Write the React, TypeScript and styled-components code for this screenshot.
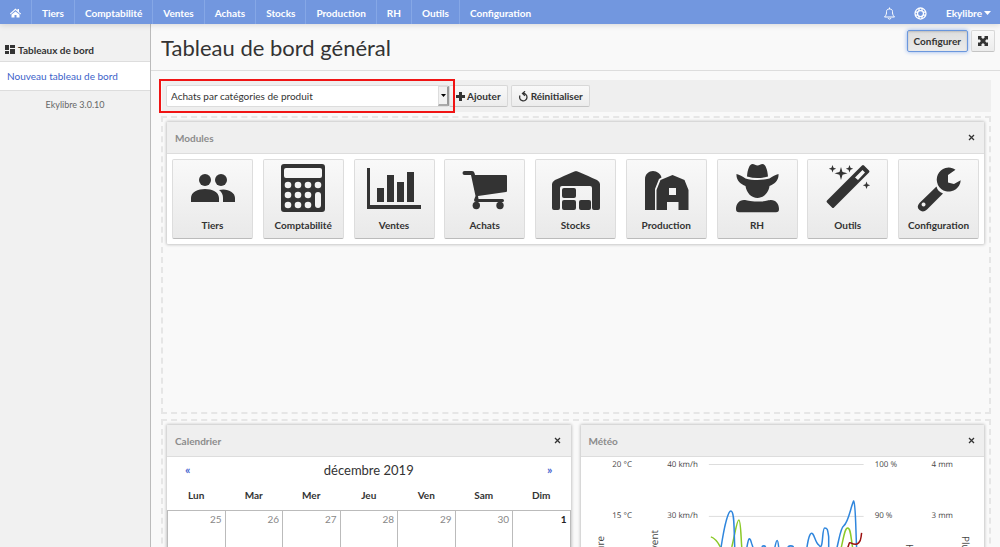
import React from "react";
import styled, { createGlobalStyle, css } from "styled-components";

const Global = createGlobalStyle`
  *, *::before, *::after { box-sizing: border-box; }
  html, body { margin: 0; }
  body { overflow: hidden; background: #f9f9f9; color: #333; font: 10px/14px Lato, "Liberation Sans", sans-serif; }
  button, select { font: inherit; color: inherit; }
  a { color: inherit; text-decoration: none; }
  svg { display: block; }
`;

const Shell = styled.div`
  display: flex;
  flex-direction: column;
  height: 100vh;
  overflow: hidden;
`;
const TopBar = styled.header`
  display: flex;
  justify-content: space-between;
  flex: none;
  height: 24px;
  background: #7297df;
  color: #fff;
  font-weight: 700;
  z-index: 1;
  box-shadow: 0 1px 6px rgba(0, 0, 0, 0.14);
`;
const NavGroup = styled.nav`
  display: flex;
  align-items: stretch;
`;
const NavLink = styled.a<{ $last?: boolean }>`
  display: flex;
  align-items: center;
  padding: 1px 10px 0;
  border-right: ${(p) => (p.$last ? "0" : "1px solid #85a7e6")};
`;
const IconLink = styled.a`
  display: flex;
  align-items: center;
  padding: 2px 9px 0;
`;
const UserButton = styled.button`
  display: flex;
  align-items: center;
  gap: 2px;
  padding: 1px 9px 0 10px;
  border: 0;
  background: none;
  font-weight: 700;
`;

const Body = styled.div`
  display: flex;
  flex: 1;
  min-height: 0;
`;
const Side = styled.aside`
  flex: none;
  width: 151px;
  background: #f1f1f1;
  border-right: 1px solid #bbb;
`;
const SideTitle = styled.h2`
  display: flex;
  align-items: center;
  gap: 3px;
  margin: 0;
  height: 37px;
  padding: 14px 5px 0;
  font-size: 10px;
  font-weight: 700;
`;
const SideLink = styled.a`
  display: flex;
  align-items: center;
  height: 30px;
  padding: 0 7px;
  background: #fff;
  border: solid #ddd;
  border-width: 1px 0;
  color: #3b5fc9;
`;
const Version = styled.p`
  margin: 7px 0;
  text-align: center;
  font-size: 9px;
  color: #666;
`;
const Main = styled.main`
  flex: 1;
  min-width: 0;
  overflow: hidden;
`;
const TitleRow = styled.div`
  display: flex;
  justify-content: space-between;
  align-items: flex-start;
  height: 47px;
  padding: 6px 5px 0 10px;
  border-bottom: 1px solid #ddd;
`;
const Title = styled.h1`
  margin: 4px 0 0;
  font-size: 22px;
  line-height: 28px;
  font-weight: 400;
`;
const Row = styled.div`
  display: flex;
  gap: 3px;
`;
const Button = styled.button<{ $active?: boolean }>`
  display: flex;
  align-items: center;
  justify-content: center;
  gap: 2px;
  height: 22px;
  padding: 0 6px;
  border: 1px solid #d8d8d8;
  border-bottom-color: #c4c4c4;
  border-radius: 2px;
  background: linear-gradient(#f9f9f9, #ececec);
  font-weight: 700;
  ${(p) => p.$active && css`
    border-color: #6b97dd;
    background: linear-gradient(#dedede, #ebebeb);
    box-shadow: 0 0 4px #8fb2ee, inset 0 1px 2px #bbb;
  `}
`;
const Toolbar = styled.div`
  display: flex;
  align-items: center;
  gap: 3px;
  height: 32px;
  margin: 9px 9px 4px 11px;
  padding: 0 4px;
  background: #efefef;
`;
const PickerWrap = styled.div`
  position: relative;
  width: 283px;
  margin-right: -3px;
`;
const Picker = styled.select`
  appearance: none;
  display: block;
  width: 100%;
  height: 22px;
  padding: 0 16px 0 4px;
  border: 1px solid #ddd;
  border-radius: 2px;
  background: #fff;
`;
const PickerArrow = styled.span`
  position: absolute;
  top: 1px;
  right: 0;
  display: grid;
  place-items: center;
  width: 11px;
  height: 20px;
  background: #f1f1f1;
  border: 1px solid #ddd;
  border-right: 2px solid #999;
  border-bottom: 2px solid #aaa;
  pointer-events: none;
`;
const Highlight = styled.span`
  position: absolute;
  inset: -6px -6px -6px -7px;
  border: 2px solid #f01414;
  pointer-events: none;
  z-index: 1;
`;

const Zone = styled.section<{ $tall?: boolean }>`
  display: grid;
  grid-auto-flow: column;
  grid-auto-columns: minmax(0, 1fr);
  align-items: start;
  gap: 10px;
  margin: 0 9px 5px 10px;
  padding: 4px 5px 4px 4px;
  height: ${(p) => (p.$tall ? "298px" : "auto")};
  border: 2px dashed #e6e6e6;
`;
const Panel = styled.article`
  background: #fff;
  border-radius: 1px;
  box-shadow: 0 0 3px 1px rgba(0, 0, 0, 0.2);
`;
const PanelHead = styled.header`
  display: flex;
  justify-content: space-between;
  align-items: center;
  height: 32px;
  padding: 0 8px;
  background: #efefef;
  border-bottom: 1px solid #ddd;
`;
const PanelTitle = styled.h3`
  margin: 0;
  font-size: 10px;
  font-weight: 700;
  color: #8c8c8c;
`;
const Close = styled.button`
  display: grid;
  place-items: center;
  width: 10px;
  height: 14px;
  padding: 0;
  border: 0;
  background: none;
`;
const Tiles = styled.div`
  display: flex;
  justify-content: space-between;
  padding: 5px;
`;
const Tile = styled.a`
  display: flex;
  flex-direction: column;
  align-items: center;
  width: 81px;
  height: 80px;
  padding-top: 4px;
  gap: 4px;
  border: 1px solid #ddd;
  border-bottom-color: #bbb;
  border-radius: 2px;
  background: linear-gradient(#f9f9f9, #e9e9e9);
  font-weight: 700;
`;

const CalHead = styled.div`
  display: flex;
  justify-content: space-between;
  align-items: center;
  height: 25px;
  padding: 0 18px;
`;
const Month = styled.h4`
  margin: 0;
  font-size: 13px;
  font-weight: 400;
`;
const Step = styled.button`
  padding: 0;
  border: 0;
  background: none;
  color: #4a68d0;
  font-size: 12px;
  font-weight: 700;
`;
const Calendar = styled.table`
  width: 100%;
  table-layout: fixed;
  border-collapse: collapse;
  th { height: 28px; padding: 0 0 2px; font-weight: 700; }
  td {
    height: 50px;
    padding: 1px 3px;
    border: 1px solid #bbb;
    vertical-align: top;
    text-align: right;
    color: #888;
  }
  td:last-child { color: #222; font-weight: 700; }
`;
const ChartSvg = styled.svg`
  width: 100%;
  height: auto;
  text { font-family: "Open Sans", "Noto Sans", sans-serif; font-size: 8px; fill: #444; text-rendering: geometricPrecision; }
  .axis { font-size: 10px; }
`;

const ink = "#333";
const icons: Record<string, React.ReactNode> = {
  Tiers: <>
    <circle cx="19" cy="20" r="6" /><circle cx="35" cy="20" r="6" />
    <path d="M5 42v-4c0-6 7-9 14-9s14 3 14 9v4zM33 30c8-2 16 2 16 8v4H37v-4c0-3-1-6-4-8z" />
  </>,
  "Comptabilité": <>
    <path fillRule="evenodd" d="M8 4h38q3 0 3 3v42q0 3-3 3H8q-3 0-3-3V7q0-3 3-3zm2 4q-2 0-2 2v6q0 2 2 2h34q2 0 2-2v-6q0-2-2-2z" />
    <g fill="#f3f3f3">
      {[25, 35, 45].flatMap((y) => [12, 22, 32].map((x) => <circle key={x + "-" + y} cx={x} cy={y} r="3.3" />))}
      <circle cx="42" cy="25" r="3.3" /><rect x="39" y="32" width="6" height="16" rx="3" />
    </g>
  </>,
  Ventes: <path d="M0 8h3v37h51v4H0zM10 28h7v14h-7zM20 15h7v27h-7zM30 22h7v20h-7zM40 12h7v30h-7z" />,
  Achats: <>
    <path d="M6.500 11H14q2 0 2.500 2l.5 2h31q1 0 1 1v15q0 1-1 1l-28 4 .5 3h24q1.500 0 1.500 1.500T44.500 42H18q-2 0-2-2l1.500-4-4.500-21H6.500q-2 0-2-2t2-2z" />
    <circle cx="18.300" cy="45.500" r="3.700" /><circle cx="42" cy="45.500" r="3.700" />
  </>,
  Stocks: <>
    <path d="M27 11q1 0 21 9q3 2 3 4v24q0 2-2 2h-4q-2 0-2-2V28q0-2-2-2H13q-2 0-2 2v20q0 2-2 2H5q-2 0-2-2V24q0-2 3-4Q26 11 27 11z" />
    <rect x="13" y="28" width="14" height="10" rx="2" /><rect x="13" y="40" width="14" height="10" rx="2" /><rect x="30" y="40" width="12" height="10" rx="2" />
  </>,
  Production: <>
    <path d="M6 50V19c0-5 4-8 8-8s8 3 8.500 6.500L20 19l-4 10v21z" />
    <path fillRule="evenodd" d="M17.500 50V30l4-10 12-5 12 5 4 10v20h-10v-8H28v8zM30 28v7h7v-7z" />
  </>,
  RH: <>
    <path d="M17 16.500c.5-7 2.500-12.500 5.500-12.500 2 0 3 1.500 5 1.500s3-1.500 5-1.500c3 0 5 5.500 5.500 12.500-7 2-14 2-21 0z" />
    <path d="M6.500 14c3 .5 6 2.500 9 4.500 7 2 17 2 24 0 3-2 6-4 9-4.500.5 6-4 10-9 12-1 7-6 12-12 12s-11-5-12-12c-5-2-9.500-6-9-12z" />
    <path d="M6 49c0-5 3-9 8-9 3 0 5 1.500 13.500 1.500S38 40 41 40c5 0 8 4 8 9q0 3.300-3 3.300H9q-3 0-3-3.300z" />
  </>,
  Outils: <>
    <path fillRule="evenodd" d="M41 5.500q1-1 2 0l5 5q1 1 0 2L13 47.500q-1 1-2 0l-5-5q-1-1 0-2zM41.500 10L34 17.500l3 2.500 7-7.500z" />
    <path d="M20 7l1.500 5 5 1.300-5 1.500L20 20l-1.500-5.200-5-1.500 5-1.300zM11.500 5l1 2.700 2.700 1-2.700 1-1 2.700-1-2.700-2.700-1 2.700-1zM28.500 5l1 2.700 2.700 1-2.700 1-1 2.700-1-2.700-2.700-1 2.700-1zM45.500 21.500l1 2.700 2.700 1-2.700 1-1 2.700-1-2.700-2.700-1 2.700-1z" />
  </>,
  Configuration: <>
    <path d="M43.500 9.700A12 12 0 1 0 48.700 20.300L42 24l-6-1.500V15z" />
    <path fillRule="evenodd" d="M24.500 26.500q1 5 6.500 7L15 49.500q-4 3.500-7.500.5T7.500 43zM11.500 42.500a2 2 0 1 0 .1 0z" />
  </>,
};

const nav = ["Tiers", "Comptabilité", "Ventes", "Achats", "Stocks", "Production", "RH", "Outils", "Configuration"];
const days = ["Lun", "Mar", "Mer", "Jeu", "Ven", "Sam", "Dim"];

function Cross() {
  return (
    <svg width="7" height="7" viewBox="0 0 7 7" stroke="#333" strokeWidth="1.3"><path d="M1 1l5 5M6 1L1 6" /></svg>
  );
}

function Widget({ title, children }: { title: string; children: React.ReactNode }) {
  return (
    <Panel>
      <PanelHead>
        <PanelTitle>{title}</PanelTitle>
        <Close aria-label={`Fermer ${title}`}><Cross /></Close>
      </PanelHead>
      {children}
    </Panel>
  );
}

function Weather() {
  return (
    <ChartSvg viewBox="0 0 404 130" role="img" aria-label="Météo">
      <path d="M128 7.500h155M128 59.500h155" stroke="#ddd" fill="none" />
      <g textAnchor="end">
        <text x="51" y="10">20 °C</text><text x="51" y="61">15 °C</text>
        <text x="117" y="10">40 km/h</text><text x="117" y="61">30 km/h</text>
      </g>
      <text x="294" y="10">100 %</text><text x="294" y="61">90 %</text>
      <text x="351" y="10">4 mm</text><text x="351" y="61">3 mm</text>
      <text className="axis" textAnchor="end" transform="translate(23 79) rotate(-90)">Température</text>
      <text className="axis" textAnchor="end" transform="translate(77 73) rotate(-90)">Vitesse du vent</text>
      <text className="axis" transform="translate(325 87) rotate(90)">Humidité</text>
      <text className="axis" transform="translate(381 79) rotate(90)">Pluviométrie</text>
      <g fill="none" strokeWidth="1.500" strokeLinejoin="round">
        <path stroke="#8bc928" d="M130 80c4 1 7 5 10 11 5 15 7 13 11-1 3-12 5-27 7-27s2 16 3 28v30M260 93c3-12 4-22 7-22s3 8 5 20" />
        <path stroke="#2f86dd" d="M140 92c3-20 7-38 10-38 4 0 3 20 4 38M166 91c2-12 3-11 5-4l2 6M181 90q2-2 4 0M194 91c2-10 3-10 4 0M207 90q3-2 6 0M226 92c2-14 4-17 6-15s3 9 6 11c5 8 3-17 6-17s3 2 4 9v12M256 92c3-12 4-21 7-23 5-4 7-19 10-25 2 2 2 27 3 48" />
        <path stroke="#9c1010" d="M266 93c3-6 2-8 4-7s5 3 8 0 2-5 3-10" />
      </g>
    </ChartSvg>
  );
}

export default function App() {
  return (
    <Shell>
      <Global />
      <TopBar>
        <NavGroup aria-label="Principal">
          <NavLink href="#" aria-label="Accueil">
            <svg width="11" height="10" viewBox="0 0 22 20" fill="#fff"><path d="M11 1l4 4V2h3v6l4 3-1 2-10-9-10 9-1-2zM11 7l8 6v6h-6v-5H9v5H3v-6z" /></svg>
          </NavLink>
          {nav.map((n) => <NavLink href="#" key={n} $last={n === "Configuration"}>{n}</NavLink>)}
        </NavGroup>
        <NavGroup aria-label="Compte">
          <IconLink href="#" aria-label="Notifications">
            <svg width="13" height="13" viewBox="0 0 26 26" fill="none" stroke="#fff" strokeWidth="2"><path d="M3 20c4-4 4-7 4-11 0-3 2-5 6-5s6 2 6 5c0 4 0 7 4 11zM10 22c1 3 5 3 6 0M13 1v3" /></svg>
          </IconLink>
          <IconLink href="#" aria-label="Aide">
            <svg width="13" height="13" viewBox="0 0 26 26" fill="none" stroke="#fff" strokeWidth="2.500"><circle cx="13" cy="13" r="11" /><circle cx="13" cy="13" r="6" /><path d="M10 2v6M16 2v6M10 18v6M16 18v6M2 10h6M2 16h6M18 10h6M18 16h6" /></svg>
          </IconLink>
          <UserButton>
            Ekylibre
            <svg width="7" height="4" viewBox="0 0 7 4" fill="#fff"><path d="M0 0h7L3.500 4z" /></svg>
          </UserButton>
        </NavGroup>
      </TopBar>
      <Body>
        <Side>
          <SideTitle>
            <svg width="10" height="10" viewBox="0 0 10 10" fill={ink}><path d="M0 0h4v5H0zM5 0h5v3H5zM0 6h4v3H0zM5 4h5v5H5z" /></svg>
            Tableaux de bord
          </SideTitle>
          <SideLink href="#">Nouveau tableau de bord</SideLink>
          <Version>Ekylibre 3.0.10</Version>
        </Side>
        <Main>
          <TitleRow>
            <Title>Tableau de bord général</Title>
            <Row>
              <Button $active>Configurer</Button>
              <Button aria-label="Plein écran">
                <svg width="10" height="10" viewBox="0 0 10 10" fill={ink}><path d="M0 0h4L3 1l2 2 2-2-1-1h4v4L9 3 7 5l2 2 1-1v4H6l1-1-2-2-2 2 1 1H0V6l1 1 2-2-2-2-1 1z" /></svg>
              </Button>
            </Row>
          </TitleRow>
          <Toolbar>
            <PickerWrap>
              <Picker aria-label="Module à ajouter"><option>Achats par catégories de produit</option></Picker>
              <PickerArrow><svg width="5" height="3" viewBox="0 0 5 3"><path d="M0 0h5L2.500 3z" /></svg></PickerArrow>
              <Highlight />
            </PickerWrap>
            <Button>
              <svg width="9" height="9" viewBox="0 0 9 9" fill={ink}><path d="M3 0h3v3h3v3H6v3H3V6H0V3h3z" /></svg>
              Ajouter
            </Button>
            <Button>
              <svg width="11" height="11" viewBox="0 0 11 11" fill="none" stroke={ink} strokeWidth="1.300"><path d="M5 2.500A3.700 3.700 0 1 1 2 4.500" /><path d="M7 .300L4.500 2.500L7 4.700" /></svg>
              Réinitialiser
            </Button>
          </Toolbar>
          <Zone $tall>
            <Widget title="Modules">
              <Tiles>
                {nav.map((n) => (
                  <Tile href="#" key={n}>
                    <svg width="54" height="50" viewBox="0 4 54 50" overflow="visible" fill={ink}>{icons[n]}</svg>
                    {n}
                  </Tile>
                ))}
              </Tiles>
            </Widget>
          </Zone>
          <Zone>
            <Widget title="Calendrier">
              <CalHead>
                <Step aria-label="Mois précédent">«</Step>
                <Month>décembre 2019</Month>
                <Step aria-label="Mois suivant">»</Step>
              </CalHead>
              <Calendar>
                <thead><tr>{days.map((d) => <th key={d} scope="col">{d}</th>)}</tr></thead>
                <tbody><tr>{[25, 26, 27, 28, 29, 30, 1].map((d) => <td key={d}>{d}</td>)}</tr></tbody>
              </Calendar>
            </Widget>
            <Widget title="Météo"><Weather /></Widget>
          </Zone>
        </Main>
      </Body>
    </Shell>
  );
}
